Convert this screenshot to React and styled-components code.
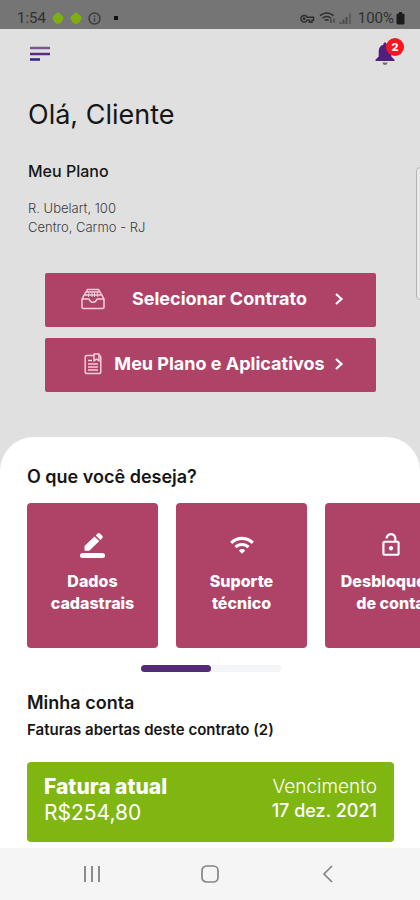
import React from 'react'
import styled, { createGlobalStyle } from 'styled-components'
import { MdWifi, MdOutlineLockOpen } from 'react-icons/md'

const services = [
  { lines: ['Dados', 'cadastrais'], icon: 'pencil' },
  { lines: ['Suporte', 'técnico'], icon: 'wifi' },
  { lines: ['Desbloqueio', 'de conta'], icon: 'lock' },
]

const ServiceIcon = ({ name }) => {
  if (name === 'wifi') return <MdWifi size={26} />
  if (name === 'lock') return <MdOutlineLockOpen size={26} />
  return (
    <svg width="26" height="26" viewBox="0 0 26 26" fill="currentColor">
      <path d="M4.500 14 14.500 4.500l4.800 4.600L9.300 18.800H5.300a.8.8 0 0 1-.8-.8zM15.700 3.400l1.900-1.900a1.600 1.600 0 0 1 2.300 0l2.400 2.300a1.600 1.600 0 0 1 0 2.300l-1.900 1.900z" />
      <rect x="0" y="21" width="25" height="5" rx="2.500" />
    </svg>
  )
}

const TrayIcon = () => (
  <svg width="24" height="22" viewBox="0 0 24 22" fill="none" stroke="#f3cfdc" strokeWidth="1.500" strokeLinejoin="round">
    <path d="M1 11h6.500c.5 0 .7.3.9.8.6 1.600 1.800 2.400 3.600 2.400s3-.8 3.600-2.400c.2-.5.4-.8.9-.8H23v8.200c0 .8-.5 1.300-1.300 1.300H2.300c-.8 0-1.300-.5-1.300-1.300z" />
    <path d="M1.200 11 3 7h18l1.800 4M3.400 7l1.400-3h14.400l1.400 3M5.400 4l1-2.600h11.200l1 2.600" />
    <path d="M8 4.500 7.500 9M11 4.500V9M13.500 4.500V9M16.200 4.500l.5 4.500" strokeWidth="1" />
  </svg>
)

const ClipboardIcon = () => (
  <svg width="18" height="22" viewBox="0 0 18 22" fill="none" stroke="#f3cfdc" strokeWidth="1.500" strokeLinejoin="round">
    <path d="M10 2.500H3C1.900 2.500 1.200 3.200 1.200 4.300v14.500c0 1.100.7 1.800 1.800 1.800h12c1.100 0 1.800-.7 1.800-1.800V4.300c0-1-.6-1.700-1.600-1.800" />
    <path d="M10 1h5v7l-2.500-2L10 8zM4 7.500h4M4 11h10M4 14h10M4 17h10" />
  </svg>
)

const Chevron = () => (
  <svg width="10" height="14" viewBox="0 0 10 14" fill="none" stroke="currentColor" strokeWidth="2.200">
    <path d="m2 2 5.500 5L2 12" />
  </svg>
)

const StatusBar = () => (
  <StatusContainer>
    <StatusGroup>
      <span>1:54</span>
      <svg width="58" height="16" viewBox="0 0 58 16">
        <path d="M7 2.500c2 0 2 1.500 4 3 2 1.300 1.500 3 1 4-1.500 3.500-3 4.500-5 4.500s-3.500-1-5-4.500c-.5-1-1-2.700 1-4 2-1.500 2-3 4-3zM25 2.500c2 0 2 1.500 4 3 2 1.300 1.500 3 1 4-1.500 3.500-3 4.500-5 4.500s-3.500-1-5-4.500c-.5-1-1-2.700 1-4 2-1.500 2-3 4-3z" fill="#7fae12" />
        <circle cx="43.500" cy="8.500" r="5.500" fill="none" stroke="#3c3c3c" strokeWidth="1.400" />
        <path d="M43.500 5.500V7M43.500 8v3.500" stroke="#3c3c3c" strokeWidth="1.300" />
      </svg>
      <Dot />
    </StatusGroup>
    <StatusGroup>
      <svg width="54" height="16" viewBox="0 0 54 16" fill="none" stroke="#2e2e2e" strokeWidth="1.500">
        <path d="M8.200 7.200a3.300 3.300 0 1 0 0 3h2.300v2h2.500v-2h1.500v-3z" />
        <circle cx="5.200" cy="8.700" r=".7" />
        <path d="M21 5.600c4-3.400 9.500-3.400 13.500 0M23.500 8.100c2.700-2 5.800-2 8.500 0M25.800 10.400c1.300-.9 2.600-.9 3.900 0" />
        <path d="M32 9v4M35 8.500v4" strokeWidth="1" />
        <path d="M41.500 12v2M44.500 9.500V14M47.500 7v7" stroke="#4b4b4b" strokeWidth="2" />
        <path d="M51 3.500V14" stroke="#5c5c5c" strokeWidth="2" />
      </svg>
      <Battery>
        100%
        <svg width="9" height="14" viewBox="0 0 9 14" fill="#1c1c1c">
          <path d="M3 1h3v1.500h1A1.500 1.500 0 0 1 8.500 4v8A1.500 1.500 0 0 1 7 13.500H2A1.500 1.500 0 0 1 .5 12V4A1.500 1.500 0 0 1 2 2.500h1z" />
        </svg>
      </Battery>
    </StatusGroup>
  </StatusContainer>
)

const App = () => {
  return (
    <Screen>
      <GlobalStyle />
      <StatusBar />
      <TopBar>
        <IconButton aria-label="Menu">
          <svg width="20" height="16" viewBox="0 0 20 16">
            <path d="M0 2h20" stroke="#77588c" strokeWidth="2.500" />
            <path d="M0 8h20" stroke="#5b2a80" strokeWidth="2.500" />
            <path d="M0 13.500h10" stroke="#35208a" strokeWidth="2.500" />
          </svg>
        </IconButton>
        <IconButton aria-label="Notificações">
          <svg width="20" height="24" viewBox="0 0 20 24" fill="#4f1f7d">
            <path d="M10 .5c1 0 1.600.6 1.600 1.500v.7c3 .7 4.700 3.200 4.700 6.500v5.300l3.200 3.300v1.200H.5v-1.200l3.200-3.300V9.200c0-3.300 1.700-5.800 4.700-6.500V2C8.400 1.100 9 .5 10 .5z" />
            <path d="M7.500 20.500h5c0 1.500-1.100 2.500-2.500 2.500s-2.500-1-2.500-2.500z" fill="#6f6b7c" />
          </svg>
          <Badge>2</Badge>
        </IconButton>
      </TopBar>

      <Intro>
        <Greeting>Olá, Cliente</Greeting>
        <PlanTitle>Meu Plano</PlanTitle>
        <Address>
          R. Ubelart, 100
          <br />
          Centro, Carmo - RJ
        </Address>
      </Intro>

      <Actions>
        <ActionButton>
          <TrayIcon />
          <span>Selecionar Contrato</span>
          <Chevron />
        </ActionButton>
        <ActionButton>
          <ClipboardIcon />
          <span>Meu Plano e Aplicativos</span>
          <Chevron />
        </ActionButton>
      </Actions>

      <Sheet>
        <SectionTitle>O que você deseja?</SectionTitle>
        <Carousel>
          {services.map((service) => (
            <ServiceCard key={service.icon}>
              <ServiceIcon name={service.icon} />
              <ServiceLabel>
                {service.lines[0]}
                <br />
                {service.lines[1]}
              </ServiceLabel>
            </ServiceCard>
          ))}
        </Carousel>
        <Track>
          <Thumb />
        </Track>
        <SectionTitle>Minha conta</SectionTitle>
        <Subtitle>Faturas abertas deste contrato (2)</Subtitle>
        <Invoice>
          <InvoiceColumn>
            <InvoiceName>Fatura atual</InvoiceName>
            <InvoiceValue>R$254,80</InvoiceValue>
          </InvoiceColumn>
          <InvoiceColumn $right>
            <DueLabel>Vencimento</DueLabel>
            <DueDate>17 dez. 2021</DueDate>
          </InvoiceColumn>
        </Invoice>
      </Sheet>

      <NavBar>
        <IconButton aria-label="Recentes">
          <svg width="18" height="18" viewBox="0 0 18 18" stroke="#8b8b8b" strokeWidth="2">
            <path d="M2 1v16M9 1v16M16 1v16" />
          </svg>
        </IconButton>
        <IconButton aria-label="Início">
          <svg width="18" height="18" viewBox="0 0 18 18" fill="none" stroke="#858585" strokeWidth="1.700">
            <rect x="1" y="1" width="16" height="16" rx="4.500" />
          </svg>
        </IconButton>
        <IconButton aria-label="Voltar">
          <svg width="18" height="18" viewBox="0 0 18 18" fill="none" stroke="#858585" strokeWidth="1.700">
            <path d="M13 1 5 9l8 8" />
          </svg>
        </IconButton>
      </NavBar>
      <EdgeHandle />
    </Screen>
  )
}

export default App

const GlobalStyle = createGlobalStyle`
  * {
    box-sizing: border-box;
  }

  body {
    margin: 0;
    background: #e0e0e0;
    color: #161616;
    font-family: 'Inter', 'Liberation Sans', sans-serif;
  }

  button {
    font-family: inherit;
    border: none;
    cursor: pointer;
  }

  svg {
    display: block;
    flex-shrink: 0;
  }
`

const Screen = styled.main`
  position: relative;
  display: flex;
  flex-direction: column;
  min-height: 100vh;
  overflow-x: hidden;
`

const StatusContainer = styled.div`
  display: flex;
  align-items: center;
  justify-content: space-between;
  height: 29px;
  padding: 7px 15px 0 17px;
  background: #757575;
  color: #303030;
  font-family: 'Roboto', sans-serif;
  font-size: 15px;
`

const StatusGroup = styled.div`
  display: flex;
  align-items: center;
  gap: 5px;
`

const Battery = styled.span`
  display: flex;
  align-items: center;
  gap: 2px;
`

const Dot = styled.i`
  width: 4px;
  height: 4px;
  background: #111;
`

const TopBar = styled.header`
  display: flex;
  align-items: center;
  justify-content: space-between;
  height: 50px;
  padding: 0 25px 0 30px;
`

const IconButton = styled.button`
  position: relative;
  padding: 0;
  background: none;
`

const Badge = styled.span`
  position: absolute;
  top: -4px;
  right: -9px;
  width: 18px;
  border-radius: 50%;
  background: #f91420;
  color: #fff;
  font-size: 11px;
  font-weight: 800;
  line-height: 18px;
`

const Intro = styled.section`
  padding: 18px 28px 0;
`

const Greeting = styled.h1`
  margin: 0;
  font-size: 27px;
  font-weight: 400;
  line-height: 36px;
`

const PlanTitle = styled.h2`
  margin: 26px 0 16px;
  font-size: 16px;
  font-weight: 500;
  line-height: 24px;
`

const Address = styled.p`
  margin: 0;
  color: #3c3c3c;
  font-size: 13px;
  font-weight: 300;
  line-height: 19px;
`

const Actions = styled.section`
  display: flex;
  flex-direction: column;
  gap: 11px;
  padding: 36px 44px 45px 45px;
`

const ActionButton = styled.button`
  display: grid;
  grid-template-columns: 24px 1fr 10px;
  align-items: center;
  justify-items: center;
  height: 54px;
  padding: 0 32px 2px 36px;
  border-radius: 2px;
  background: #af4367;
  color: #fff;
  font-size: 18px;
  font-weight: 700;
  line-height: 24px;
  white-space: nowrap;
`

const Sheet = styled.section`
  flex: 1;
  padding: 27px 26px 6px 27px;
  border-radius: 34px 34px 0 0;
  background: #fff;
`

const SectionTitle = styled.h2`
  margin: 0;
  font-size: 18px;
  font-weight: 600;
  line-height: 26px;
`

const Carousel = styled.div`
  display: flex;
  gap: 18px;
  margin: 13px -26px 0 0;
  overflow-x: auto;
  scrollbar-width: none;
`

const ServiceCard = styled.button`
  display: flex;
  flex: 0 0 131px;
  flex-direction: column;
  align-items: center;
  gap: 12px;
  height: 145px;
  padding: 29px 0 0;
  border-radius: 4px;
  background: #af4367;
  color: #fff;
`

const ServiceLabel = styled.span`
  font-size: 16px;
  font-weight: 800;
  line-height: 22px;
`

const Track = styled.div`
  width: 140px;
  height: 7px;
  margin: 17px auto 18px;
  border-radius: 4px;
  background: #f4f5f6;
`

const Thumb = styled.div`
  width: 50%;
  height: 100%;
  border-radius: 4px;
  background: #532a78;
`

const Subtitle = styled.h3`
  margin: 4px 0 22px;
  font-size: 15px;
  font-weight: 600;
  line-height: 20px;
`

const Invoice = styled.article`
  display: flex;
  justify-content: space-between;
  height: 80px;
  padding: 12px 17px;
  border-radius: 4px;
  background: #80b612;
  color: #fff;
`

const InvoiceColumn = styled.div`
  display: flex;
  flex-direction: column;
  text-align: ${(props) => (props.$right ? 'right' : 'left')};
`

const InvoiceName = styled.strong`
  font-size: 21px;
  font-weight: 800;
  line-height: 26px;
`

const InvoiceValue = styled.span`
  font-size: 21px;
  line-height: 26px;
`

const DueLabel = styled.span`
  font-size: 19px;
  font-weight: 300;
  line-height: 26px;
`

const DueDate = styled.span`
  font-size: 18px;
  font-weight: 500;
  line-height: 22px;
`

const NavBar = styled.nav`
  display: flex;
  align-items: center;
  justify-content: center;
  gap: 100px;
  height: 52px;
  background: #f5f5f5;
`

/* edge panel handle of the phone, floats over the page */
const EdgeHandle = styled.div`
  position: absolute;
  top: 167px;
  right: -8px;
  width: 12px;
  height: 133px;
  border: 1px solid #b5b5b5;
  border-radius: 4px;
  background: #ebebeb;
`
